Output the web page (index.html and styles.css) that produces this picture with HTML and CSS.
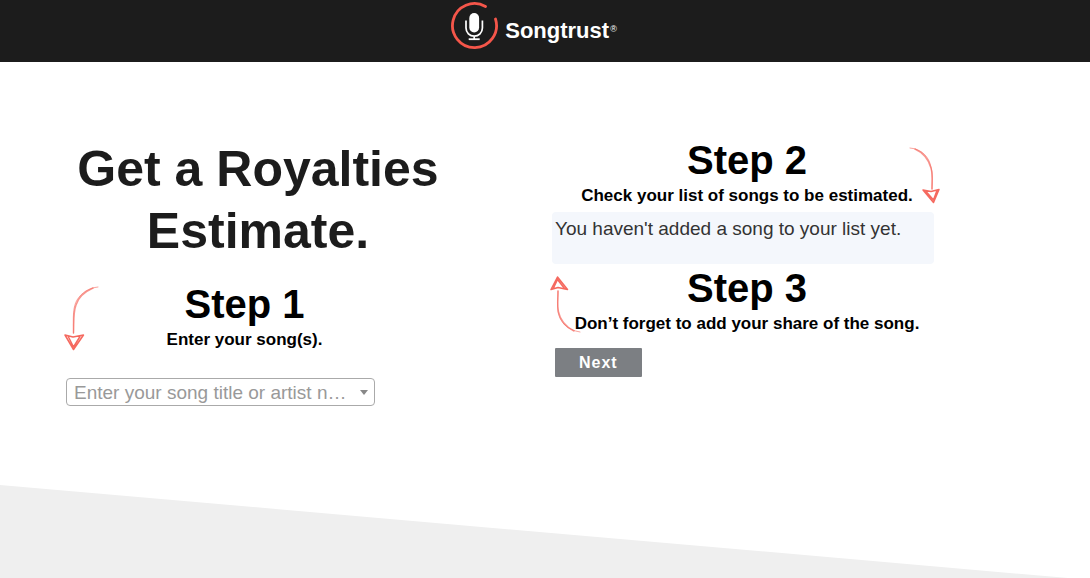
FILE: index.html
```html
<!DOCTYPE html>
<html lang="en">
<head>
    <meta charset="UTF-8">
    <meta name="viewport" content="width=device-width, initial-scale=1.0">
    <title>Songtrust Royalties Estimate</title>
    <link rel="stylesheet" href="styles.css">
</head>
<body>
    <header class="site-header">
        <a class="logo" href="#">
            <svg class="logo-mark" width="48" height="50" viewBox="0 0 48 50" fill="none" aria-hidden="true">
                <path d="M34.500 6.500A22 22 0 1 0 44.500 19" stroke="#f5564a" stroke-width="2.8" stroke-linecap="round"/>
                <rect x="18.300" y="13" width="9.800" height="19.400" rx="4.900" fill="#fff"/>
                <path d="M15 20.500V28a8.200 8.200 0 0 0 16.400 0v-7.500M23.200 36v3" stroke="#fff" stroke-width="1.7"/>
                <path d="M17.700 39.200h11" stroke="#fff" stroke-width="1.8"/>
            </svg>
            <span class="logo-text">Songtrust<sup>®</sup></span>
        </a>
    </header>

    <main class="container">
        <section class="column-left">
            <h1>Get a Royalties Estimate.</h1>
            <div class="step step-one">
                <svg class="arrow arrow-left" width="36" height="66" viewBox="0 0 36 66" fill="none" aria-hidden="true">
                    <path class="line-faint" d="M34 1C25 2 18 6 13 14C9 21 9 30 9.500 47"/>
                    <path class="line" d="M29 2C20 6 14 12 12 19C9 27 10 37 9.500 47"/>
                    <path class="head" d="M1 49L9.500 63.500L19.500 49L9 51ZM4 50L9.500 61L16 50.500"/>
                </svg>
                <h2>Step 1</h2>
                <p><label for="song">Enter your song(s).</label></p>
            </div>
            <select id="song" class="song-select">
                <option>Enter your song title or artist name</option>
            </select>
        </section>

        <section class="column-right">
            <div class="step">
                <svg class="arrow arrow-right" width="34" height="58" viewBox="0 0 34 58" fill="none" aria-hidden="true">
                    <path class="line-faint" d="M2 1C14 2 21 10 23 20C25 27 24 33 24 42"/>
                    <path class="line" d="M7 2C16 6 21 14 23 21C25 28 24 34 24 42"/>
                    <path class="head" d="M15 43L25.500 55.500L31 42.500L23 44.500ZM18 44.500L25.500 53L29 43.500"/>
                </svg>
                <h2>Step 2</h2>
                <p>Check your list of songs to be estimated.</p>
            </div>
            <div class="song-list">You haven't added a song to your list yet.</div>
            <div class="step">
                <svg class="arrow arrow-up" width="32" height="58" viewBox="0 0 32 58" fill="none" aria-hidden="true">
                    <path class="line-faint" d="M30 56C17 54 10 46 8 36C7 29 8 23 8 15"/>
                    <path class="line" d="M24 55C14 50 10 43 8.500 36C7 29 8 23 8 15"/>
                    <path class="head" d="M1 13.500L7.500 1L17.500 13.500L8 11.500ZM3 13L7.500 3.500L14.500 12.500"/>
                </svg>
                <h2>Step 3</h2>
                <p>Don’t forget to add your share of the song.</p>
            </div>
            <button class="next-button" type="button">Next</button>
        </section>
    </main>

    <div class="slope"></div>
</body>
</html>
```
FILE: styles.css
```css
* {
    box-sizing: border-box;
}

body {
    font-family: "Liberation Sans", Arial, sans-serif;
    display: flex;
    flex-direction: column;
    min-height: 100vh;
    margin: 0;
    background: #fff;
    color: #1c1c1c;
}

h1, h2, p {
    margin: 0;
    text-align: center;
}

/* Header */
.site-header {
    display: flex;
    justify-content: center;
    height: 62px;
    padding-right: 22px;
    background: #1c1c1c;
}

.logo {
    display: flex;
    align-items: flex-start;
    gap: 6px;
    color: #fff;
    text-decoration: none;
}

.logo-mark {
    display: block;
}

.logo-text {
    padding-top: 18px;
    font-size: 22px;
    font-weight: bold;
    line-height: 26px;
}

.logo-text sup {
    margin-left: 1px;
    font-size: 9px;
    font-weight: normal;
    line-height: 9px;
    vertical-align: 6px;
}

/* Two columns of steps */
.container {
    display: grid;
    grid-template-columns: minmax(0, 64fr) minmax(0, 65fr);
    gap: 102px;
    padding: 74px 148px 40px 66px;
}

.column-left {
    padding-top: 2px;
}

h1 {
    font-size: 50px;
    line-height: 62px;
    margin-bottom: 18px;
}

h2 {
    color: #000;
    font-size: 40px;
    line-height: 48px;
}

.step {
    position: relative;
}

.step p {
    color: #000;
    font-size: 17px;
    font-weight: bold;
    line-height: 24px;
}

.step-one {
    max-width: 357px;
    margin-bottom: 26px;
}

.song-select {
    display: block;
    width: 100%;
    max-width: 309px;
    height: 28px;
    padding: 2px 27px 0 7px;
    border: 1px solid #aaa;
    border-radius: 4px;
    appearance: none;
    background: #fff url("data:image/svg+xml,%3Csvg xmlns='http://www.w3.org/2000/svg' width='8' height='5'%3E%3Cpath d='M0 0h8L4 5z' fill='%23888'/%3E%3C/svg%3E") no-repeat right 6px center;
    color: #999;
    font-family: inherit;
    font-size: 19px;
    line-height: 24px;
    text-overflow: ellipsis;
    white-space: nowrap;
    overflow: hidden;
}

.song-list {
    min-height: 52px;
    margin: 4px 8px 0 0;
    padding: 5px 3px;
    border-radius: 4px;
    background: #f4f7fc;
    color: #333;
    font-size: 19px;
    line-height: 24px;
}

.next-button {
    display: block;
    margin: 12px 0 0 3px;
    padding: 0 24px;
    border: 0;
    border-radius: 1px;
    background: #7c7f83;
    color: #fff;
    font-family: inherit;
    font-size: 16px;
    font-weight: bold;
    letter-spacing: 1px;
    line-height: 29px;
    cursor: pointer;
}

/* Hand drawn arrows */
.arrow {
    position: absolute;
    stroke: #f5695f;
    stroke-linecap: round;
    stroke-linejoin: round;
}

.arrow .line {
    stroke-width: 1.5;
    opacity: 0.7;
}

.arrow .line-faint {
    stroke-width: 1;
    opacity: 0.6;
}

.arrow .head {
    stroke-width: 1.5;
}

.arrow-left {
    top: 6px;
    left: -2px;
}

.arrow-right {
    top: 11px;
    right: 0;
}

.arrow-up {
    top: 12px;
    left: -2px;
}

/* Grey wedge at the bottom of the page */
.slope {
    height: 93px;
    margin-top: auto;
    background: #efefef;
    clip-path: polygon(0 0, 98% 100%, 0 100%);
}
```
